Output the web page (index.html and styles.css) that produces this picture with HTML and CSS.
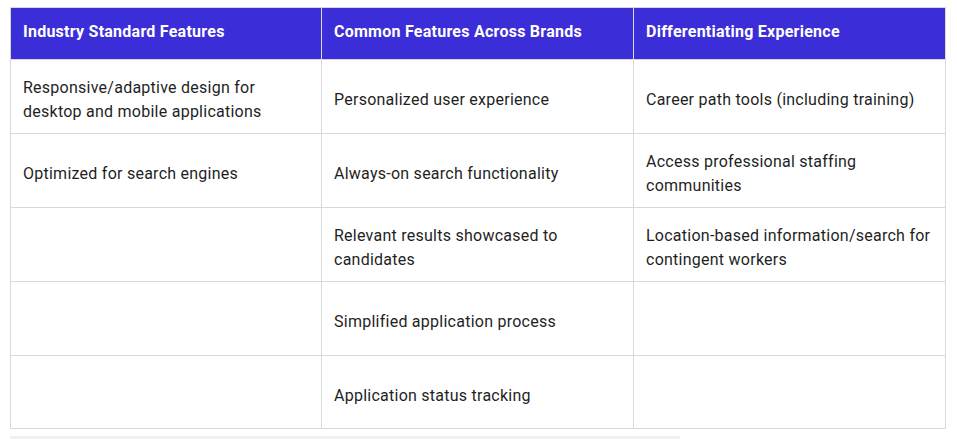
FILE: index.html
```html
<!DOCTYPE html>
<html>
<head>
<meta charset="utf-8">
<link rel="stylesheet" href="styles.css">
</head>
<body>
<div class="wrap">
  <table class="features">
    <colgroup><col class="c1"><col class="c2"><col class="c3"></colgroup>
    <thead>
      <tr>
        <th>Industry Standard Features</th>
        <th>Common Features Across Brands</th>
        <th>Differentiating Experience</th>
      </tr>
    </thead>
    <tbody>
      <tr>
        <td>Responsive/adaptive design for desktop and mobile applications</td>
        <td>Personalized user experience</td>
        <td>Career path tools (including training)</td>
      </tr>
      <tr>
        <td>Optimized for search engines</td>
        <td>Always-on search functionality</td>
        <td>Access professional staffing communities</td>
      </tr>
      <tr>
        <td></td>
        <td>Relevant results showcased to candidates</td>
        <td>Location-based information/search for contingent workers</td>
      </tr>
      <tr>
        <td></td>
        <td>Simplified application process</td>
        <td></td>
      </tr>
      <tr>
        <td></td>
        <td>Application status tracking</td>
        <td></td>
      </tr>
    </tbody>
  </table>
  <div class="scrollbar"></div>
</div>
</body>
</html>
```

FILE: styles.css
```css
html, body {
  margin: 0;
  padding: 0;
  background: #ffffff;
}
.wrap {
  padding: 7px 12px 0 10px;
  font-family: Roboto, "Liberation Sans", Arial, sans-serif;
}
.features {
  border-collapse: collapse;
  width: 935px;
  table-layout: fixed;
}
.c1 { width: 311px; }
.c2 { width: 312px; }
.c3 { width: 312px; }
.features th,
.features td {
  border: 1px solid #d9d9d9;
  text-align: left;
  vertical-align: middle;
  font-size: 16px;
  line-height: 24px;
  letter-spacing: 0.25px;
}
.features th {
  background: #3b2dd7;
  color: #ffffff;
  font-weight: 700;
  height: 48px;
  padding: 0 12px 3px 12px;
}
.features td {
  color: #1f1f1f;
  height: 64.9px;
  padding: 8px 12px 0 12px;
}
.scrollbar {
  margin-top: 7px;
  width: 670px;
  height: 4px;
  background: #f1f1f1;
}
```
